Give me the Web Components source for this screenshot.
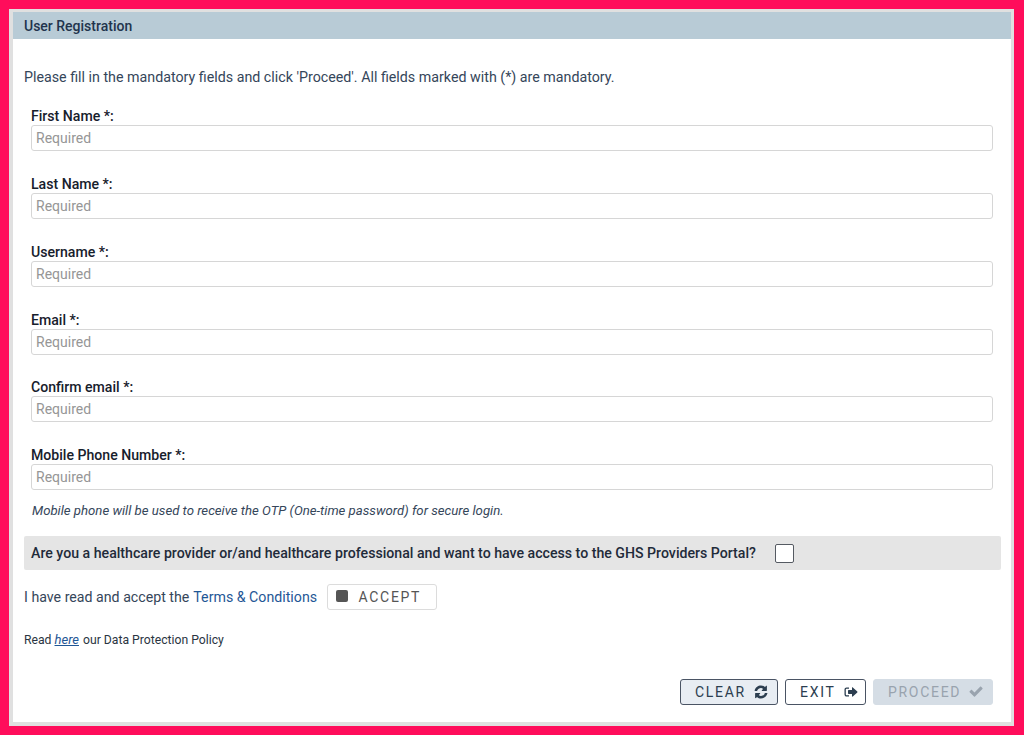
<!DOCTYPE html>
<html>
<head>
<meta charset="utf-8">
<title>User Registration</title>
<style>
  html, body { margin: 0; height: 100%; }
  body {
    background: #ff0d5b;
    font-family: Roboto, "Liberation Sans", sans-serif;
    color: #2c3e50;
  }
</style>
</head>
<body>
<reg-page>
  <reg-panel heading="User Registration">
    <reg-intro slot="intro">Please fill in the mandatory fields and click 'Proceed'. All fields marked with (*) are mandatory.</reg-intro>
    <reg-field label="First Name *:"></reg-field>
    <reg-field label="Last Name *:"></reg-field>
    <reg-field label="Username *:"></reg-field>
    <reg-field label="Email *:"></reg-field>
    <reg-field label="Confirm email *:"></reg-field>
    <reg-field label="Mobile Phone Number *:" hint="Mobile phone will be used to receive the OTP (One-time password) for secure login."></reg-field>
    <reg-provider slot="after">Are you a healthcare provider or/and healthcare professional and want to have access to the GHS Providers Portal?</reg-provider>
    <reg-terms slot="after"></reg-terms>
    <reg-policy slot="after"></reg-policy>
    <reg-actions slot="after"></reg-actions>
  </reg-panel>
</reg-page>

<script>
const icons = {
  refresh: `<svg width="14" height="14" viewBox="0 0 14 14"><path fill="currentColor" d="M12.9 1.2v4.3c0 .3-.2.5-.5.5H8.1c-.4 0-.6-.5-.3-.8l1.300-1.300C8.400 3.200 7.700 3 7 3 5.300 3 3.900 4 3.300 5.600c0 .2-.2.300-.4.300H1c-.3 0-.5-.2-.4-.5C1.300 2.600 3.900.5 7 .5c1.500 0 2.900.5 4 1.500l1-1c.3-.3.9-.1.900.2zM1.500 8h4.300c.4 0 .6.500.3.800l-1.300 1.300c.6.600 1.400.9 2.200.9 1.700 0 3.100-1 3.700-2.600 0-.2.200-.3.400-.3H13c.3 0 .5.200.4.500-.7 2.800-3.300 4.900-6.400 4.900-1.500 0-2.900-.5-4-1.500l-1 1c-.3.300-.9.100-.9-.2V8.500c0-.3.200-.5.400-.5z"/></svg>`,
  exit: `<svg width="14" height="14" viewBox="0 0 14 14"><path fill="currentColor" d="M5 2.500v1.200H2.800c-.6 0-1 .4-1 1v4.600c0 .6.400 1 1 1H5v1.200H2.600C1.400 11.500.500 10.600.500 9.400V4.600c0-1.200.9-2.100 2.100-2.100z"/><path fill="currentColor" d="M8 2.800c0-.4.500-.6.800-.3l4.500 4.100c.2.200.2.600 0 .8l-4.500 4.100c-.3.300-.8.100-.8-.3V8.900H4.600c-.3 0-.6-.3-.6-.6V5.700c0-.3.300-.6.600-.6H8z"/></svg>`,
  check: `<svg width="14" height="14" viewBox="0 0 14 14"><path fill="currentColor" d="M13.400 4.100 6 11.500c-.3.300-.7.300-1 0L.7 7.200c-.3-.3-.3-.7 0-1l1.300-1.300c.3-.3.700-.3 1 0l2.500 2.500 5.600-5.600c.3-.3.700-.3 1 0l1.300 1.300c.3.300.3.700 0 1z"/></svg>`
};

class RegPage extends HTMLElement {
  constructor() {
    super();
    this.attachShadow({ mode: "open" });
    this.shadowRoot.innerHTML = `
    <style>
      :host { display: block; box-sizing: border-box; height: 735px; padding: 9px 10px 9px 9px; }
    </style>
    <slot></slot>`;
  }
}

class RegPanel extends HTMLElement {
  constructor() {
    super();
    this.attachShadow({ mode: "open" });
    this.shadowRoot.innerHTML = `
    <style>
      :host {
        display: block; box-sizing: border-box; height: 717px;
        background: #fff; border: solid #e0e0e0; border-width: 3px 3px 4px 4px;
      }
      header {
        box-sizing: border-box; height: 27px; padding: 1px 0 0 11px; line-height: 27px;
        background: #b8cbd6; color: #22344d; font-size: 14px; font-weight: 500;
      }
      .fields { padding: 20.2px 18px 0; }
    </style>
    <header>${this.getAttribute("heading")}</header>
    <slot name="intro"></slot>
    <div class="fields"><slot></slot></div>
    <slot name="after"></slot>`;
  }
}

class RegIntro extends HTMLElement {
  constructor() {
    super();
    this.attachShadow({ mode: "open" });
    this.shadowRoot.innerHTML = `
    <style>
      :host { display: block; padding: 27px 11px 0; height: 22px; line-height: 22px; font-size: 14.25px; color: #35465a; }
    </style>
    <slot></slot>`;
  }
}

class RegField extends HTMLElement {
  constructor() {
    super();
    this.attachShadow({ mode: "open" });
    const hint = this.getAttribute("hint");
    this.shadowRoot.innerHTML = `
    <style>
      :host { display: block; margin-bottom: 24.8px; }
      :host(:last-of-type) { margin-bottom: 0; }
      label { display: block; height: 17px; line-height: 17px; font-size: 14.1px; font-weight: 500; color: #17202c; }
      input {
        display: block; box-sizing: border-box; width: 100%; height: 26px; margin: 0; padding: 0 4px;
        border: 1px solid #d6d6d6; border-radius: 3px; outline: none; background: #fff;
        font: 14px Roboto, "Liberation Sans", sans-serif; color: #2c3e50;
      }
      input::placeholder { color: #969696; opacity: 1; }
      small { display: block; margin: 12.8px 0 0 1px; line-height: 16px; font-size: 13.18px; font-style: italic; color: #35465a; }
    </style>
    <label>${this.getAttribute("label")}</label>
    <input type="text" placeholder="Required">
    ${hint ? `<small>${hint}</small>` : ""}`;
  }
}

class RegProvider extends HTMLElement {
  constructor() {
    super();
    this.attachShadow({ mode: "open" });
    this.shadowRoot.innerHTML = `
    <style>
      :host {
        display: flex; align-items: center; height: 34px; margin: 17px 10px 0 11px; padding: 0 7px;
        background: #e5e5e5; border-radius: 2px; font-size: 14.15px; font-weight: 500; color: #1f2b3a;
      }
      .box { box-sizing: border-box; width: 19px; height: 19px; margin: 1px 0 0 19px; background: #fff; border: 1.5px solid #555a62; border-radius: 2px; }
    </style>
    <span><slot></slot></span><span class="box"></span>`;
  }
}

class RegTerms extends HTMLElement {
  constructor() {
    super();
    this.attachShadow({ mode: "open" });
    this.shadowRoot.innerHTML = `
    <style>
      :host { display: flex; align-items: center; height: 26px; margin: 14px 0 0 11px; font-size: 14.2px; color: #35465a; }
      a { color: #1f5796; text-decoration: none; margin-left: 4px; }
      button {
        display: flex; align-items: center; box-sizing: border-box; width: 110px; height: 26px; margin: 0 0 0 10px; padding: 0 0 0 7.5px;
        background: #fff; border: 1px solid #dcdcdc; border-radius: 3px; color: #555;
        font: 14px Roboto, "Liberation Sans", sans-serif; letter-spacing: 1.7px;
      }
      i { flex: none; width: 12px; height: 12px; margin: -1px 11px 0 0; background: #555; border-radius: 2px; }
    </style>
    <span>I have read and accept the</span><a href="#">Terms &amp; Conditions</a>
    <button type="button"><i></i>ACCEPT</button>`;
  }
}

class RegPolicy extends HTMLElement {
  constructor() {
    super();
    this.attachShadow({ mode: "open" });
    this.shadowRoot.innerHTML = `
    <style>
      :host { display: block; margin: 22.5px 0 0 11px; height: 16px; line-height: 16px; font-size: 12.2px; color: #2a3542; }
      a { color: #1f5796; font-style: italic; font-size: 13px; margin-right: 1px; }
    </style>
    Read <a href="#">here</a> our Data Protection Policy`;
  }
}

class RegButton extends HTMLElement {
  constructor() {
    super();
    this.attachShadow({ mode: "open" });
    this.shadowRoot.innerHTML = `
    <style>
      :host { display: block; }
      button {
        display: flex; align-items: center; gap: 8px; box-sizing: border-box;
        height: 26px; margin: 0; padding: 0 0 0 14px; width: var(--w);
        background: #fff; border: 1px solid #4a5464; border-radius: 3px; color: #2c3e50;
        font: 14px Roboto, "Liberation Sans", sans-serif; letter-spacing: 1.7px;
      }
      :host([tone="soft"]) button { background: #e8edf3; }
      :host([disabled]) button { background: #d5dde5; border-color: #d5dde5; color: #99a3ae; }
      svg { display: block; }
    </style>
    <button type="button"><slot></slot>${icons[this.getAttribute("icon")]}</button>`;
    this.style.setProperty("--w", this.getAttribute("w") + "px");
  }
}

class RegActions extends HTMLElement {
  constructor() {
    super();
    this.attachShadow({ mode: "open" });
    this.shadowRoot.innerHTML = `
    <style>
      :host { display: flex; justify-content: flex-end; gap: 7px; margin: 30.5px 18px 0 0; }
    </style>
    <reg-button icon="refresh" tone="soft" w="98">CLEAR</reg-button>
    <reg-button icon="exit" w="81">EXIT</reg-button>
    <reg-button icon="check" disabled w="120">PROCEED</reg-button>`;
  }
}

customElements.define("reg-page", RegPage);
customElements.define("reg-panel", RegPanel);
customElements.define("reg-intro", RegIntro);
customElements.define("reg-field", RegField);
customElements.define("reg-provider", RegProvider);
customElements.define("reg-terms", RegTerms);
customElements.define("reg-policy", RegPolicy);
customElements.define("reg-button", RegButton);
customElements.define("reg-actions", RegActions);
</script>
</body>
</html>
